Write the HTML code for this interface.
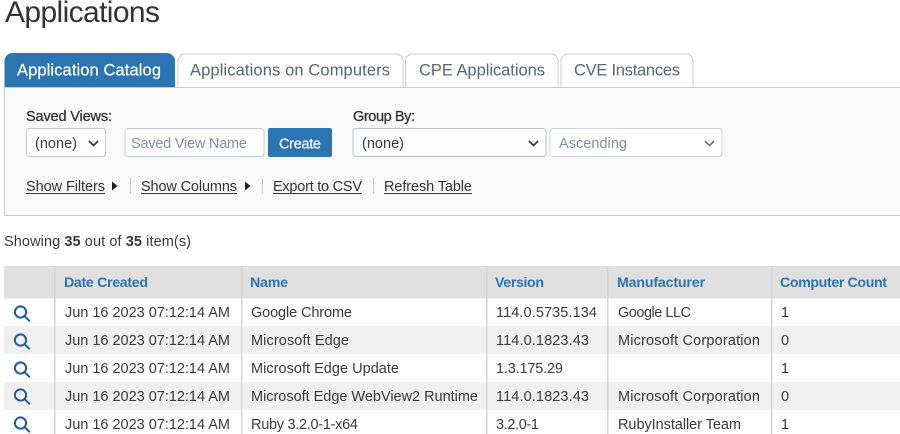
<!DOCTYPE html>
<html lang="en"><head><meta charset="utf-8"><title>Applications</title>
<style>
html,body{margin:0;padding:0;background:#fff;width:900px;height:434px;overflow:hidden}
svg{display:block;filter:blur(.3px)}
text{font-family:"Liberation Sans",sans-serif;font-size:14.5px;fill:#3a3a3a}
.h{font-size:14.2px;font-weight:700;fill:#2b75b3}
.t{font-size:16.5px;fill:#5a6570}
.u{fill:#333}
.c{fill:none;stroke:#333;stroke-width:1.6}
.i{fill:none;stroke:#1f5a9e;stroke-width:2;stroke-linecap:round}
</style></head><body>
<svg width="900" height="434" viewBox="0 0 900 434" xmlns="http://www.w3.org/2000/svg">
<text x="5" y="22" textLength="155" lengthAdjust="spacing" style="font-size:30px;fill:#333">Applications</text>

<rect x="4.5" y="87.5" width="900" height="128" fill="#f9f9f9" stroke="#ccc"/>
<path d="M4.5 87V61a8 8 0 0 1 8-8H167a8 8 0 0 1 8 8V87Z" fill="#2b75b3"/>
<path d="M178 87V61a7 7 0 0 1 7-7H396a7 7 0 0 1 7 7V87M405.500 87V61a7 7 0 0 1 7-7H551a7 7 0 0 1 7 7V87M561 87V61a7 7 0 0 1 7-7H686a7 7 0 0 1 7 7V87" fill="#fff" stroke="#ccc"/>
<text x="17" y="75.500" textLength="144" lengthAdjust="spacing" style="font-size:16.500px;fill:#fff;stroke:#fff;stroke-width:.2">Application Catalog</text>
<text class="t" x="190" y="75.500" textLength="200" lengthAdjust="spacing">Applications on Computers</text>
<text class="t" x="419" y="75.500" textLength="126" lengthAdjust="spacing">CPE Applications</text>
<text class="t" x="574" y="75.500" textLength="106" lengthAdjust="spacing">CVE Instances</text>

<text x="26" y="121" textLength="86" lengthAdjust="spacing" style="font-size:14.500px;fill:#333;stroke:#333;stroke-width:.3">Saved Views:</text>
<rect x="26.500" y="128.500" width="79" height="28" rx="3" fill="#fff" stroke="#c5cad0"/>
<text x="35" y="148" textLength="42" lengthAdjust="spacing">(none)</text>
<path class="c" d="M89 141l4.500 4.500 4.500-4.500"/>
<rect x="125" y="128.500" width="139" height="28" rx="3" fill="#fff" stroke="#c5cad0"/>
<text x="131" y="148" textLength="116" lengthAdjust="spacing" style="fill:#868e96">Saved View Name</text>
<rect x="268" y="128" width="64" height="29" rx="2" fill="#2b75b3"/>
<text x="279" y="148.500" textLength="42" lengthAdjust="spacing" style="fill:#fff;stroke:#fff;stroke-width:.15">Create</text>

<text x="353" y="121" textLength="62" lengthAdjust="spacing" style="font-size:14.500px;fill:#333;stroke:#333;stroke-width:.3">Group By:</text>
<rect x="353" y="128.500" width="193" height="28" rx="3" fill="#fff" stroke="#bcc1c7"/>
<text x="362" y="148" textLength="42" lengthAdjust="spacing">(none)</text>
<path class="c" d="M529 141l4.500 4.500 4.500-4.500"/>
<rect x="550" y="128.500" width="172" height="28" rx="3" fill="#fff" stroke="#d0d4d8"/>
<text x="559" y="148" textLength="68" lengthAdjust="spacing" style="fill:#868e96">Ascending</text>
<path d="M705 141l4.500 4.500 4.500-4.500" fill="none" stroke="#666" stroke-width="1.500"/>

<text class="u" x="26" y="191" textLength="79" lengthAdjust="spacing">Show Filters</text>
<rect x="26" y="193" width="79" height="1" fill="#333"/>
<path d="M112 181.500l5.500 4.500-5.500 4.500Z" fill="#222"/>
<rect x="130" y="178" width="1" height="16" fill="#ccc"/>
<text class="u" x="141" y="191" textLength="96" lengthAdjust="spacing">Show Columns</text>
<rect x="141" y="193" width="96" height="1" fill="#333"/>
<path d="M245 181.500l5.500 4.500-5.500 4.500Z" fill="#222"/>
<rect x="262" y="178" width="1" height="16" fill="#ccc"/>
<text class="u" x="273" y="191" textLength="89" lengthAdjust="spacing">Export to CSV</text>
<rect x="273" y="193" width="89" height="1" fill="#333"/>
<rect x="373" y="178" width="1" height="16" fill="#ccc"/>
<text class="u" x="384" y="191" textLength="88" lengthAdjust="spacing">Refresh Table</text>
<rect x="384" y="193" width="88" height="1" fill="#333"/>

<text x="4" y="246" textLength="187" lengthAdjust="spacing">Showing <tspan font-weight="700">35</tspan> out of <tspan font-weight="700">35</tspan> item(s)</text>

<rect x="4" y="266" width="896" height="32.500" fill="#e0e0e0"/>
<rect x="4" y="326" width="896" height="28" fill="#f0f0f0"/>
<rect x="4" y="382" width="896" height="28" fill="#f0f0f0"/>
<g fill="#d4d4d4">
<rect x="54" y="266" width="1.500" height="168"/>
<rect x="241" y="266" width="1.500" height="168"/>
<rect x="486" y="266" width="1.500" height="168"/>
<rect x="607" y="266" width="1.500" height="168"/>
<rect x="771" y="266" width="1.500" height="168"/>
</g>
<text class="h" x="64" y="287" textLength="84" lengthAdjust="spacing">Date Created</text>
<text class="h" x="250" y="287" textLength="38" lengthAdjust="spacing">Name</text>
<text class="h" x="495" y="287" textLength="49" lengthAdjust="spacing">Version</text>
<text class="h" x="617" y="287" textLength="88" lengthAdjust="spacing">Manufacturer</text>
<text class="h" x="780" y="287" textLength="107" lengthAdjust="spacing">Computer Count</text>

<g>
<circle class="i" cx="20.500" cy="312" r="5.600"/><path class="i" d="M24.800 316.300l4.400 4.400"/>
<circle class="i" cx="20.500" cy="340" r="5.600"/><path class="i" d="M24.800 344.300l4.400 4.400"/>
<circle class="i" cx="20.500" cy="368" r="5.600"/><path class="i" d="M24.800 372.300l4.400 4.400"/>
<circle class="i" cx="20.500" cy="395" r="5.600"/><path class="i" d="M24.800 399.300l4.400 4.400"/>
<circle class="i" cx="20.500" cy="423" r="5.600"/><path class="i" d="M24.800 427.300l4.400 4.400"/>
</g>

<text x="65" y="317" textLength="165" lengthAdjust="spacing">Jun 16 2023 07:12:14 AM</text>
<text x="251" y="317" textLength="101" lengthAdjust="spacing">Google Chrome</text>
<text x="496" y="317" textLength="101" lengthAdjust="spacing">114.0.5735.134</text>
<text x="618" y="317" textLength="73" lengthAdjust="spacing">Google LLC</text>
<text x="781" y="317">1</text>

<text x="65" y="345" textLength="165" lengthAdjust="spacing">Jun 16 2023 07:12:14 AM</text>
<text x="251" y="345" textLength="98" lengthAdjust="spacing">Microsoft Edge</text>
<text x="496" y="345" textLength="93" lengthAdjust="spacing">114.0.1823.43</text>
<text x="618" y="345" textLength="142" lengthAdjust="spacing">Microsoft Corporation</text>
<text x="781" y="345">0</text>

<text x="65" y="373" textLength="165" lengthAdjust="spacing">Jun 16 2023 07:12:14 AM</text>
<text x="251" y="373" textLength="148" lengthAdjust="spacing">Microsoft Edge Update</text>
<text x="496" y="373" textLength="67" lengthAdjust="spacing">1.3.175.29</text>
<text x="781" y="373">1</text>

<text x="65" y="401" textLength="165" lengthAdjust="spacing">Jun 16 2023 07:12:14 AM</text>
<text x="251" y="401" textLength="227" lengthAdjust="spacing">Microsoft Edge WebView2 Runtime</text>
<text x="496" y="401" textLength="93" lengthAdjust="spacing">114.0.1823.43</text>
<text x="618" y="401" textLength="142" lengthAdjust="spacing">Microsoft Corporation</text>
<text x="781" y="401">0</text>

<text x="65" y="429" textLength="165" lengthAdjust="spacing">Jun 16 2023 07:12:14 AM</text>
<text x="251" y="429" textLength="107" lengthAdjust="spacing">Ruby 3.2.0-1-x64</text>
<text x="496" y="429" textLength="43" lengthAdjust="spacing">3.2.0-1</text>
<text x="618" y="429" textLength="123" lengthAdjust="spacing">RubyInstaller Team</text>
<text x="781" y="429">1</text>
</svg>
</body></html>
